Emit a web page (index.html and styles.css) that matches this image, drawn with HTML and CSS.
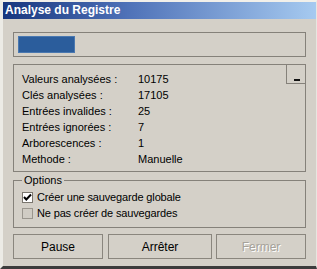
FILE: index.html
```html
<!DOCTYPE html>
<html lang="fr">
<head>
  <meta charset="UTF-8" />
  <title>Analyse du Registre</title>
  <link rel="stylesheet" href="styles.css">
</head>
<body>

  <div class="window">
    <div class="titlebar">Analyse du Registre</div>

    <div class="content">
      <!-- progress -->
      <div class="progress-box"><div class="progress-fill"></div></div>

      <!-- stats -->
      <div class="stats-box">
        <div class="stats">
          <span>Valeurs analysées :</span><span>10175</span>
          <span>Clés analysées :</span><span>17105</span>
          <span>Entrées invalides :</span><span>25</span>
          <span>Entrées ignorées :</span><span>7</span>
          <span>Arborescences :</span><span>1</span>
          <span>Methode :</span><span>Manuelle</span>
        </div>
        <button class="collapse-btn"><span class="dash"></span></button>
      </div>

      <!-- options -->
      <fieldset class="options">
        <legend>Options</legend>
        <label class="check">
          <span class="box">
            <svg width="9" height="9" viewBox="0 0 9 9"><path d="M1 4 L3.3 6.5 L8 1.5" fill="none" stroke="#000" stroke-width="2"/></svg>
          </span>
          Créer une sauvegarde globale
        </label>
        <label class="check">
          <span class="box off"></span>
          Ne pas créer de sauvegardes
        </label>
      </fieldset>

      <!-- buttons -->
      <div class="buttons">
        <button class="btn">Pause</button>
        <button class="btn wide">Arrêter</button>
        <button class="btn" disabled>Fermer</button>
      </div>
    </div>
  </div>

</body>
</html>
```

FILE: styles.css
```css
html, body { margin: 0; padding: 0; background: #d4d0c8; }
body { font-family: 'Liberation Sans', Arial, sans-serif; font-size: 11px; color: #000; }

/* ---------- WINDOW FRAME ---------- */
.window {
  width: 317px; height: 269px; box-sizing: border-box;
  border-top: 2px solid #f2f0ea; border-left: 3px solid #ecebe6;
  border-right: 1px solid #e8e6e0; border-bottom: 3px solid #3c3c3c;
  background: #d4d0c8;
}
.titlebar {
  height: 17px; line-height: 17px; padding-left: 2px;
  background: linear-gradient(to right, #17367e, #4f72b8 40%, #a6caf0);
  color: #fff; font-weight: bold; font-size: 12px;
}
.content { padding: 13px 0 0 10px; }

/* ---------- PROGRESS ---------- */
.progress-box {
  width: 293px; height: 25px; box-sizing: border-box;
  border: 1px solid #85817a; padding: 3px 4px;
}
.progress-fill { width: 57px; height: 17px; background: #2b5d9c; box-shadow: inset 0 0 0 1px #4a78b0; }

/* ---------- STATS ---------- */
.stats-box {
  position: relative; width: 293px; height: 108px; box-sizing: border-box;
  margin-top: 7px; border: 1px solid #85817a; padding: 6px 0 0 8px;
}
.stats { display: grid; grid-template-columns: 116px auto; line-height: 16px; }
.collapse-btn {
  position: absolute; top: -1px; right: -1px;
  width: 20px; height: 20px; padding: 0; margin: 0;
  background: #d4d0c8; border: 1px solid #85817a;
  display: flex; align-items: flex-end; justify-content: center;
}
.dash { width: 6px; height: 2px; background: #111; margin-bottom: 2px; margin-left: 2px; }

/* ---------- OPTIONS ---------- */
.options {
  width: 293px; height: 54px; box-sizing: border-box; margin: 2px 0 0 0;
  border: 1px solid #85817a; padding: 0 0 0 8px;
}
.options legend { padding: 0 2px; line-height: 13px; }
.check { display: flex; align-items: center; gap: 4px; height: 16px; letter-spacing: -0.15px; }
.check:first-of-type { margin-top: 2px; }
.box {
  width: 11px; height: 11px; box-sizing: border-box;
  border: 1px solid #7a766e; background: #fff;
  display: flex; align-items: center; justify-content: center;
}
.box.off { background: #d0ccc4; border-color: #9a968e; }

/* ---------- BUTTONS ---------- */
.buttons { display: flex; margin-top: 6px; }
.btn {
  width: 90px; height: 25px; margin: 0 5px 0 0; padding: 0;
  font-family: inherit; font-size: 12px; color: #000;
  background: #d4d0c8; border: 1px solid #8a867e;
}
.btn.wide { width: 104px; margin-right: 4px; }
.btn:disabled { color: #a6a29a; text-shadow: 1px 1px 0 #fff; }
```
